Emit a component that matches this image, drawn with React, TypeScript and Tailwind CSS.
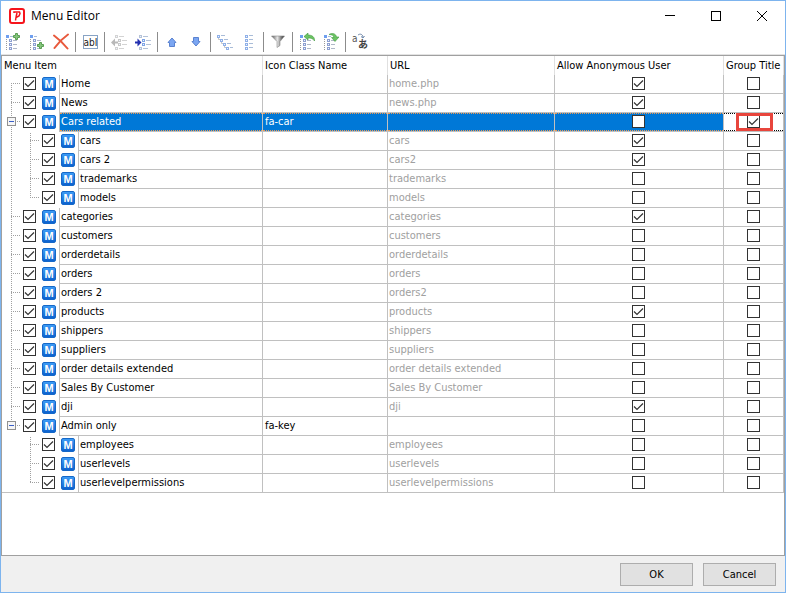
import * as React from "react";

type Item = {
  name: string;
  icon?: string;
  url?: string;
  anonymous?: boolean;
  group?: boolean;
  selected?: boolean;
  expandable?: boolean;
  guides: Guide[];
};

type Guide = "first" | "tee" | "end" | "line" | "none";

const items: Item[] = [
  { name: "Home", url: "home.php", anonymous: true, guides: ["first"] },
  { name: "News", url: "news.php", anonymous: true, guides: ["tee"] },
  {
    name: "Cars related",
    icon: "fa-car",
    group: true,
    selected: true,
    expandable: true,
    guides: ["tee"],
  },
  { name: "cars", url: "cars", anonymous: true, guides: ["line", "tee"] },
  { name: "cars 2", url: "cars2", anonymous: true, guides: ["line", "tee"] },
  { name: "trademarks", url: "trademarks", guides: ["line", "tee"] },
  { name: "models", url: "models", guides: ["line", "end"] },
  { name: "categories", url: "categories", anonymous: true, guides: ["tee"] },
  { name: "customers", url: "customers", guides: ["tee"] },
  { name: "orderdetails", url: "orderdetails", guides: ["tee"] },
  { name: "orders", url: "orders", guides: ["tee"] },
  { name: "orders 2", url: "orders2", guides: ["tee"] },
  { name: "products", url: "products", anonymous: true, guides: ["tee"] },
  { name: "shippers", url: "shippers", guides: ["tee"] },
  { name: "suppliers", url: "suppliers", guides: ["tee"] },
  {
    name: "order details extended",
    url: "order details extended",
    guides: ["tee"],
  },
  { name: "Sales By Customer", url: "Sales By Customer", guides: ["tee"] },
  { name: "dji", url: "dji", anonymous: true, guides: ["tee"] },
  { name: "Admin only", icon: "fa-key", expandable: true, guides: ["end"] },
  { name: "employees", url: "employees", guides: ["none", "tee"] },
  { name: "userlevels", url: "userlevels", guides: ["none", "tee"] },
  {
    name: "userlevelpermissions",
    url: "userlevelpermissions",
    guides: ["none", "end"],
  },
];

export default function App() {
  return (
    <div className="flex min-h-screen flex-col border border-[#7db4ee] bg-white font-['DejaVu_Sans_Condensed','Noto_Sans',sans-serif] text-[11px] leading-[18px] text-black">
      <TitleBar />
      <Toolbar />
      <main className="flex-1 border border-[#a0a0a0]">
        <MenuTable />
      </main>
      <footer className="flex justify-end gap-2.5 bg-[#f0f0f0] pt-[7px] pr-[9px] pb-[6px]">
        <DialogButton>OK</DialogButton>
        <DialogButton>Cancel</DialogButton>
      </footer>
    </div>
  );
}

function DialogButton({ children }: React.PropsWithChildren) {
  return (
    <button
      type="button"
      className="h-[23px] w-[73px] border border-[#adadad] bg-[#e1e1e1]"
    >
      {children}
    </button>
  );
}

function TitleBar() {
  return (
    <header className="flex h-[29px] items-center pl-2">
      <svg width="16" height="16" viewBox="0 0 16 16" aria-hidden="true">
        <rect x="1" y="1" width="14" height="14" rx="2" fill="#fff" stroke="#f5141c" strokeWidth="2" />
        <path
          d="M5 5V4h5.500L11 5.500 10 8 7 9.500 6.500 12.500M8 5 7 9"
          fill="none"
          stroke="#f5141c"
          strokeWidth="1.500"
        />
      </svg>
      <h1 className="flex-1 pl-1.5 font-['Open_Sans','Noto_Sans',sans-serif] text-[12px]">
        Menu Editor
      </h1>
      <CaptionButton label="Minimize">
        <path d="M0 4.500h10" />
      </CaptionButton>
      <CaptionButton label="Maximize">
        <path d="M.5.5h9v9h-9z" />
      </CaptionButton>
      <CaptionButton label="Close">
        <path d="M0 0l10 10M10 0L0 10" shapeRendering="auto" />
      </CaptionButton>
    </header>
  );
}

function CaptionButton({
  label,
  children,
}: React.PropsWithChildren<{ label: string }>) {
  return (
    <button
      type="button"
      aria-label={label}
      className="flex h-full w-[46px] items-center justify-center"
    >
      <svg
        width="10"
        height="10"
        viewBox="0 0 10 10"
        fill="none"
        stroke="#000"
        shapeRendering="crispEdges"
      >
        {children}
      </svg>
    </button>
  );
}

/* Toolbar */

function Toolbar() {
  return (
    <div role="toolbar" className="flex h-[25px] items-center border-b border-[#e3e3e3]">
      <Tool label="Add item">
        <SmallTree />
        <Plus x={8} y={0} />
      </Tool>
      <Tool label="Add subitem">
        <SmallTree />
        <Plus x={8} y={9} />
      </Tool>
      <Tool label="Delete">
        <path d="M1 2.500C5 5.500 11 11 14.500 15.500" stroke="#e8593c" strokeWidth="2" fill="none" strokeLinecap="round" />
        <path d="M15 1.500C10 5 5 10 1.500 15" stroke="#e8593c" strokeWidth="2" fill="none" strokeLinecap="round" />
      </Tool>
      <Separator />
      <Tool label="Rename">
        <rect x="1.500" y="2.500" width="14" height="13" fill="#fff" stroke="#88a3c4" />
        <text x="8.500" y="13" textAnchor="middle" fontSize="10" fill="#222">
          abI
        </text>
      </Tool>
      <Separator />
      <Tool label="Outdent">
        <Indents box="#c8c8c8" line="#d3d3d3" />
        <path d="M0 9.500 4 5.500v3h3v2H4v3Z" fill="#b8b8b8" />
      </Tool>
      <Tool label="Indent">
        <Indents box="#7fa5e6" line="#b4c2d8" />
        <path d="M6.500 9.500 2.500 5.500v3H0v2h2.500v3Z" fill="#2330b0" />
      </Tool>
      <Separator />
      <Tool label="Move up">
        <Arrow />
      </Tool>
      <Tool label="Move down">
        <g transform="rotate(180 8 9)">
          <Arrow />
        </g>
      </Tool>
      <Separator />
      <Tool label="Expand all">
        {[0, 1, 2, 3].map((i) => (
          <g key={i}>
            <Node x={i * 3} y={1 + i * 4} />
            <rect x={i * 3 + 4} y={2 + i * 4} width="4" height="1" fill="#a9bcd8" />
          </g>
        ))}
        <path d="M1.500 5v1.500H3M4.500 9v1.500H6M7.500 13v1.500H9" stroke="#c5c5c5" fill="none" />
      </Tool>
      <Tool label="Collapse all">
        {[1, 5, 9, 13].map((y) => (
          <g key={y}>
            <Node x={4} y={y} />
            <rect x="8" y={y + 1} width="4" height="1" fill="#a9bcd8" />
          </g>
        ))}
      </Tool>
      <Separator />
      <Tool label="Filter">
        <defs>
          <linearGradient id="funnel">
            <stop offset="0" stopColor="#555" />
            <stop offset=".45" stopColor="#e6e6e6" />
            <stop offset="1" stopColor="#222" />
          </linearGradient>
        </defs>
        <path d="M1.500 3h13L10 8.500v4L7 14.500v-6Z" fill="url(#funnel)" stroke="#888" strokeWidth=".6" />
      </Tool>
      <Separator />
      <Tool label="Undo">
        <SmallTree />
        <path
          d="M5 3.500 9 0v2c4 0 7 2 6.500 6-1.500-2.500-3.500-3.200-6.500-3v2Z"
          fill="#6cc464"
          stroke="#3f9a3c"
          strokeWidth=".6"
        />
      </Tool>
      <Tool label="Redo">
        <SmallTree />
        <path
          d="M6 1.500C9-.5 13 .5 13.500 4H16l-4 4.500L8.500 4.500h2.500C10.500 2.500 9 1.500 6 1.500Z"
          fill="#6cc464"
          stroke="#3f9a3c"
          strokeWidth=".6"
        />
      </Tool>
      <Separator />
      <Tool label="Translate">
        <text x="0" y="9" fontSize="10" fill="#555">
          a
        </text>
        <text
          x="6"
          y="15"
          fontSize="10"
          fontWeight="700"
          fill="#444"
          className="font-['Noto_Sans_CJK_JP',sans-serif]"
        >
          あ
        </text>
        <path d="M6 2C8 .5 10.500 1 11 4M9 3.500l2 1.500 1.500-2" stroke="#6d86a8" fill="none" />
      </Tool>
    </div>
  );
}

function Tool({ label, children }: React.PropsWithChildren<{ label: string }>) {
  return (
    <button
      type="button"
      title={label}
      aria-label={label}
      className="flex h-full w-6 items-center justify-center"
    >
      <svg width="16" height="18" viewBox="0 0 16 18">
        {children}
      </svg>
    </button>
  );
}

function Separator() {
  return <div className="mx-0.5 h-5 w-px bg-[#8c8c8c]" />;
}

function Node({ x, y, color = "#8fb0e8" }: { x: number; y: number; color?: string }) {
  return (
    <>
      <rect x={x} y={y + 1} width="3" height="3" fill={color} />
      <rect x={x + 1} y={y + 2} width="1" height="1" fill="#eef4ff" />
    </>
  );
}

function SmallTree() {
  return (
    <>
      <rect x="1" y="2" width="3" height="3" fill="#6f9ff0" />
      <rect x="5" y="3" width="3" height="1" fill="#a9bcd8" />
      <path d="M1.500 6v11" stroke="#9a9a9a" strokeDasharray="1 1" />
      {[5, 9, 13].map((y) => (
        <g key={y}>
          <Node x={4} y={y} color="#8d9fd0" />
          <rect x="8" y={y + 2} width="4" height="1" fill="#b0b8c8" />
        </g>
      ))}
    </>
  );
}

function Plus({ x, y }: { x: number; y: number }) {
  return (
    <path
      transform={`translate(${x} ${y})`}
      d="M2.500.5h2v2h2v2h-2v2h-2v-2h-2v-2h2Z"
      fill="#86c67c"
      stroke="#5a9e54"
    />
  );
}

function Indents({ box, line }: { box: string; line: string }) {
  return (
    <>
      <Node x={4} y={1} color={line} />
      <Node x={7} y={5} color={box} />
      <Node x={7} y={9} color={box} />
      <Node x={4} y={13} color={line} />
      <path d="M8 3.500h5M11 7.500h5M11 11.500h5M8 15.500h5" stroke={line} />
    </>
  );
}

function Arrow() {
  return (
    <path
      d="M8 5 12 9.500H10.500V13.500H5.500V9.500H4Z"
      fill="#7ba6f2"
      stroke="#5a82d0"
      strokeLinejoin="round"
    />
  );
}

/* Tree grid */

function MenuTable() {
  return (
    <table className="w-full table-fixed border-separate border-spacing-0">
      <colgroup>
        <col className="w-[261px]" />
        <col className="w-[125px]" />
        <col />
        <col className="w-[169px]" />
        <col className="w-[60px]" />
      </colgroup>
      <thead>
        <tr className="h-[19px] text-left whitespace-nowrap">
          {[
            "Menu Item",
            "Icon Class Name",
            "URL",
            "Allow Anonymous User",
            "Group Title",
          ].map((title) => (
            <th
              key={title}
              scope="col"
              className="border-r border-[#e0e0e0] p-0 pl-0.5 font-normal"
            >
              {title}
            </th>
          ))}
        </tr>
      </thead>
      <tbody>
        {items.map((item, i) => (
          <Row key={item.name} item={item} odd={i % 2 === 1} last={i === items.length - 1} />
        ))}
      </tbody>
    </table>
  );
}

function Row({ item, odd, last }: { item: Item; odd: boolean; last: boolean }) {
  const fill = item.selected
    ? "border-y border-dotted border-[#f09a50] bg-[#0078d7] text-white leading-4"
    : "";
  const cell = "border-r border-b border-[#c0c0c0] p-0";
  const checkPad = item.selected ? "pt-px" : "pt-0.5";

  return (
    <tr className="h-[19px] whitespace-nowrap">
      <td className="border-r border-[#c0c0c0] p-0">
        <div className={last ? "flex h-[19px] border-b border-[#c0c0c0]" : "flex h-[19px]"}>
          {item.guides.map((guide, i) => (
            <TreeGuide
              key={i}
              guide={guide}
              odd={odd}
              expandable={item.expandable && i === item.guides.length - 1}
            />
          ))}
          <div className="w-[19px] pt-0.5 pl-0.5">
            <Check label={`Show ${item.name}`} checked />
          </div>
          <div className="w-[19px] pt-0.5 pl-0.5">
            <MenuIcon />
          </div>
          <div
            className={
              last
                ? "flex-1 border-l border-[#c0c0c0]"
                : "flex-1 border-b border-l border-[#c0c0c0]"
            }
          >
            <div className={`h-[18px] pl-px ${fill}`}>{item.name}</div>
          </div>
        </div>
      </td>
      <td className={cell}>
        <div className={`h-[18px] pl-0.5 ${fill}`}>{item.icon}</div>
      </td>
      <td className={cell}>
        <div className={`h-[18px] pl-px text-[#a0a0a0] ${fill}`}>{item.url}</div>
      </td>
      <td className={cell}>
        <div className={`flex h-[18px] justify-center pr-px ${checkPad} ${fill}`}>
          <Check label={`Allow anonymous: ${item.name}`} checked={item.anonymous} />
        </div>
      </td>
      <td className={cell}>
        <div
          className={`relative flex h-[18px] justify-center ${checkPad} ${
            item.selected ? "border-y border-dotted border-black" : ""
          }`}
        >
          <Check label={`Group title: ${item.name}`} checked={item.group} />
          {item.selected && (
            <div className="pointer-events-none absolute -inset-y-px right-[10px] left-3 border-3 border-[#e8453c]" />
          )}
        </div>
      </td>
    </tr>
  );
}

function Check({ label, checked }: { label: string; checked?: boolean }) {
  return (
    <span className="grid size-[13px]">
      <input
        type="checkbox"
        aria-label={label}
        defaultChecked={checked}
        className="peer col-start-1 row-start-1 size-[13px] appearance-none border border-[#333] bg-white"
      />
      <svg
        viewBox="0 0 13 13"
        className="pointer-events-none col-start-1 row-start-1 size-[13px] opacity-0 peer-checked:opacity-100"
      >
        <path d="M2 6.500 5 9.500l6-6" fill="none" stroke="#333" strokeWidth="1.200" />
      </svg>
    </span>
  );
}

function MenuIcon() {
  return (
    <span className="flex size-[14px] items-center justify-center rounded-[2px] border border-[#1568c8] bg-linear-to-b from-[#3d9bf5] to-[#0b62cf] font-['Liberation_Sans',sans-serif] text-[11px] leading-3 font-bold text-white">
      M
    </span>
  );
}

function TreeGuide({
  guide,
  odd,
  expandable,
}: {
  guide: Guide;
  odd: boolean;
  expandable?: boolean;
}) {
  const top = guide === "first" ? 9 : 0;
  const bottom = guide === "end" ? 9 : 19;
  const start = odd ? 1 - (top % 2) : top % 2;

  return (
    <svg
      width="19"
      height="19"
      viewBox="0 0 19 19"
      fill="none"
      stroke="#a0a0a0"
      strokeDasharray="1 1"
      shapeRendering="crispEdges"
    >
      {guide !== "none" && (
        <path d={`M9.500 ${top}V${bottom}`} strokeDashoffset={start} />
      )}
      {guide !== "none" && guide !== "line" && <path d="M9 8.500h10" />}
      {expandable && (
        <g strokeDasharray="none">
          <rect x="5.500" y="4.500" width="8" height="8" fill="#f6f6f6" stroke="#919191" />
          <path d="M7 8.500h5" stroke="#3a5fc8" />
        </g>
      )}
    </svg>
  );
}
